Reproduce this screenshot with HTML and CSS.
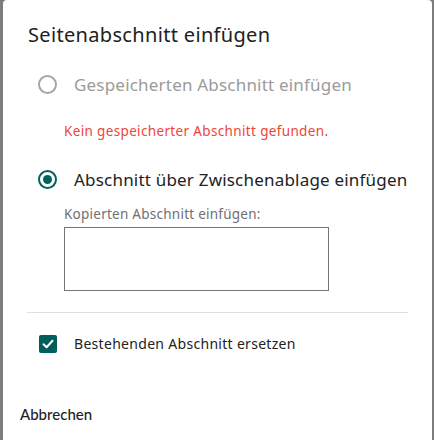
FILE: index.html
```html
<!DOCTYPE html>
<html lang="de">
<head>
<meta charset="utf-8">
<link rel="stylesheet" href="styles.css">
</head>
<body>
<div class="dialog">
  <h2 class="title">Seitenabschnitt einfügen</h2>
  <div class="content">
    <div class="option disabled">
      <span class="radio"></span>
      <span class="opt-label">Gespeicherten Abschnitt einfügen</span>
    </div>
    <div class="error">Kein gespeicherter Abschnitt gefunden.</div>
    <div class="option">
      <span class="radio checked"><span class="dot"></span></span>
      <span class="opt-label">Abschnitt über Zwischenablage einfügen</span>
    </div>
    <div class="field">
      <label class="field-label">Kopierten Abschnitt einfügen:</label>
      <div class="textarea"></div>
    </div>
    <hr class="divider">
    <div class="check-row">
      <span class="checkbox">
        <svg width="14" height="14" viewBox="0 0 14 14"><path d="M2.5 7.2 L5.6 10.2 L11.5 3.8" fill="none" stroke="#fff" stroke-width="2" stroke-linecap="round" stroke-linejoin="round"/></svg>
      </span>
      <span class="check-label">Bestehenden Abschnitt ersetzen</span>
    </div>
  </div>
  <div class="actions">
    <button class="btn">Abbrechen</button>
  </div>
</div>
</body>
</html>
```
FILE: styles.css
```css
html, body {
  margin: 0;
  padding: 0;
  height: 100%;
}
body {
  background: #7d7d7d;
  padding: 0 2px 0 3px;
  box-sizing: border-box;
  font-family: "Noto Sans", sans-serif;
}
.dialog {
  background: #fff;
  height: 100%;
  border-radius: 4px 4px 0 0;
  display: flex;
  flex-direction: column;
}
.title {
  margin: 0;
  padding: 22px 0 0 25px;
  font-size: 20px;
  letter-spacing: 0.33px;
  line-height: 26px;
  font-weight: 400;
  color: #212121;
}
.content {
  padding: 0 24px 0 24px;
  display: flex;
  flex-direction: column;
}
.option {
  display: flex;
  align-items: center;
  margin-top: 24px;
  height: 24px;
}
.radio {
  width: 15px;
  height: 15px;
  border: 2px solid #a6a6a6;
  border-radius: 50%;
  margin-left: 11px;
  display: flex;
  align-items: center;
  justify-content: center;
}
.radio.checked {
  border-color: #00625d;
}
.dot {
  width: 9px;
  height: 9px;
  border-radius: 50%;
  background: #00625d;
}
.opt-label {
  margin-left: 17px;
  font-size: 17px;
  letter-spacing: 0.2px;
  color: #222;
}
.disabled .opt-label {
  color: #9b9b9b;
}
.error {
  margin: 26px 0 0 37px;
  font-size: 13.5px;
  letter-spacing: 0.35px;
  color: #f04438;
}
.option + .error + .option { margin-top: 27px; }
.field {
  margin: 15px 0 0 37px;
  display: flex;
  flex-direction: column;
}
.field-label {
  font-size: 13.5px;
  letter-spacing: 0.25px;
  color: #707070;
  line-height: 16px;
}
.textarea {
  margin-top: 5px;
  border: 1px solid #757575;
  box-sizing: border-box;
  width: 265px;
  height: 64px;
}
.divider {
  margin: 21px 0 0 0;
  border: 0;
  border-top: 1px solid #e0e0e0;
}
.check-row {
  display: flex;
  align-items: center;
  margin-top: 21px;
}
.checkbox {
  width: 18px;
  height: 18px;
  margin-left: 12px;
  border-radius: 2px;
  background: #005f5c;
  display: flex;
  align-items: center;
  justify-content: center;
}
.check-label {
  margin-left: 17px;
  font-size: 14px;
  letter-spacing: 0.3px;
  color: #222;
}
.actions {
  margin-top: auto;
  padding: 0 0 15px 17px;
}
.btn {
  border: 0;
  background: none;
  padding: 0;
  font-family: "Lato", sans-serif;
  font-size: 15px;
  font-weight: 500;
  color: #1d1d1d;
}
```
